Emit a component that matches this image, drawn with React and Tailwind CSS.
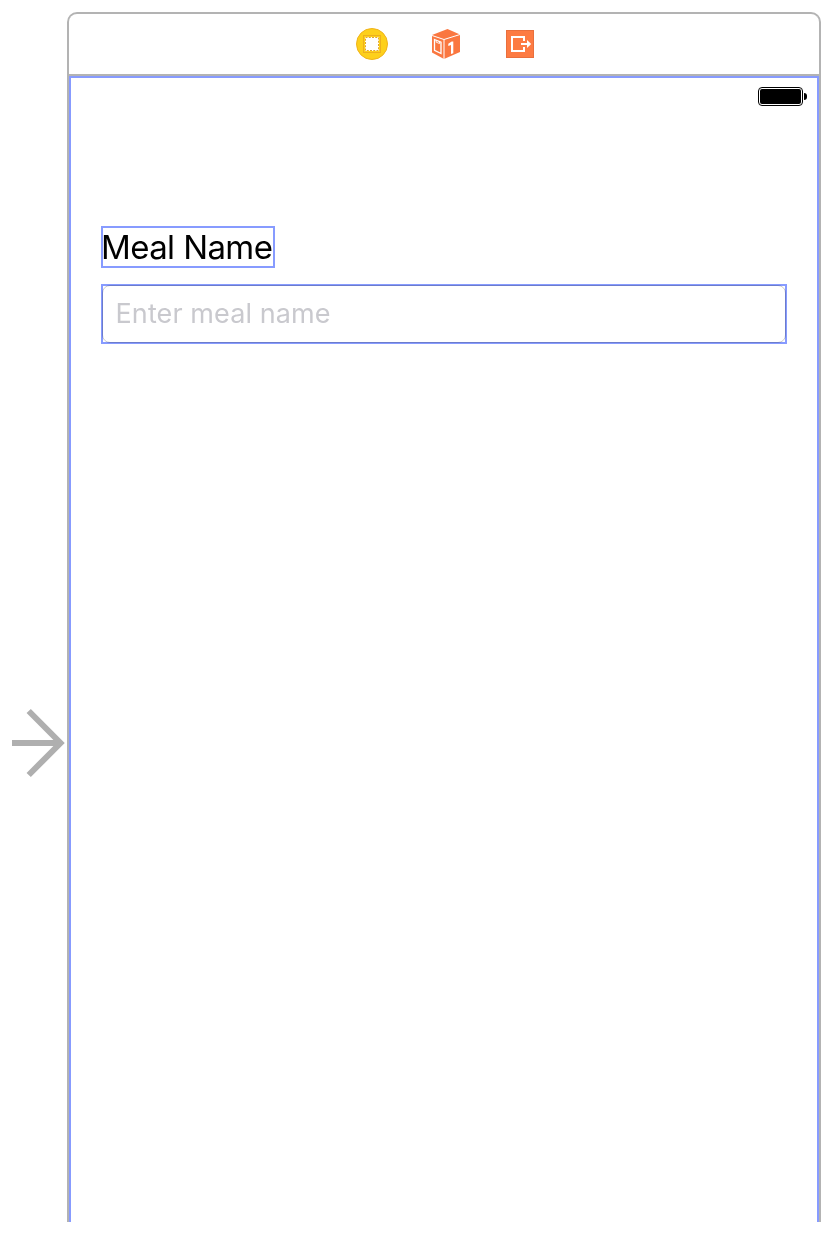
function ControllerIcon() {
  return (
    <svg width="32" height="32" viewBox="0 0 32 32" aria-hidden="true">
      <circle cx="16" cy="16" r="15.5" fill="#fdd01c" stroke="#f0b31b" />
      <rect x="7.5" y="7.5" width="17" height="17" fill="#fdd01c" stroke="#edb01f" />
      <rect x="9" y="9" width="14" height="14" fill="#fff" />
      <rect x="9.5" y="9.5" width="13" height="13" fill="none" stroke="#e2a62c" strokeDasharray="2 1.25" />
    </svg>
  );
}

function ResponderIcon() {
  return (
    <svg width="30" height="32" viewBox="0 0 30 32" aria-hidden="true">
      <path d="M1 7 16.5 1 29 6.5V24L13 31 1 24.5Z" fill="#fa7740" />
      <path d="M1 7.5 13 11.5 29 6.5M13 11.5V31" fill="none" stroke="#fff" strokeWidth="1" />
      <path d="M3.5 11.5 10 14.2V25.5L3.5 22.3Z" fill="none" stroke="#fff" strokeWidth="1.3" />
      <path d="M5.2 12.4v1.8l3.3 1.3v-1.8" fill="none" stroke="#fff" strokeWidth="0.9" />
      <path d="M17.3 15.8 20.7 13.5H22.3V25.2L20 26V16.9L17.3 18Z" fill="#fff" />
    </svg>
  );
}

function ExitIcon() {
  return (
    <svg width="28" height="28" viewBox="0 0 28 28" aria-hidden="true">
      <rect x="0.5" y="0.5" width="27" height="27" fill="#fd7b43" stroke="#e96f3d" />
      <path d="M18 11V7H6v14h12v-4" fill="none" stroke="#fff" strokeWidth="2" />
      <path d="M15 14h7" stroke="#fff" strokeWidth="2" />
      <path d="M21 10 25.2 14 21 18Z" fill="#fff" />
    </svg>
  );
}

function Battery() {
  return (
    <div className="flex items-center">
      <div className="h-[19px] w-[45px] rounded-[4px] border border-black p-px">
        <div className="h-full w-full rounded-[2px] bg-black" />
      </div>
      <div className="ml-px h-[7px] w-[3px] rounded-r-full bg-black" />
    </div>
  );
}

export default function App() {
  return (
    <div className="flex h-[1234px] w-[833px] bg-white pt-3 font-['Inter',sans-serif]">
      <aside className="w-[67px] shrink-0 pt-[696px]">
        <svg className="ml-3" width="54" height="70" viewBox="0 0 54 70" aria-hidden="true">
          <path d="M0 35H48M16.7 3 48.5 35 16.7 67" fill="none" stroke="#afafaf" strokeWidth="6" />
        </svg>
      </aside>
      <main className="flex h-[1210px] w-[754px] flex-col rounded-t-[10px] border-2 border-b-0 border-[#b3b3b3]">
        <header className="flex h-[62px] shrink-0 items-center justify-center gap-[43px] border-b-2 border-[#b3b3b3] pl-[2px]">
          <ControllerIcon />
          <ResponderIcon />
          <div className="ml-[2px] flex"><ExitIcon /></div>
        </header>
        <section className="flex flex-1 flex-col border-2 border-b-0 border-[#879bff]">
          <div className="flex h-[148px] justify-end pr-[10px] pt-[9px]">
            <div className="h-[19px]"><Battery /></div>
          </div>
          <form className="flex flex-col gap-4 px-[30px]">
            <label className="h-[42px] w-[174px] whitespace-nowrap border-2 border-[#879bff] text-[33px] leading-[38px] tracking-[-0.6px] text-black">
              <span className="-ml-[2px]">Meal Name</span>
            </label>
            <div className="relative h-[60px] p-px">
              <div className="h-[58px] rounded-[8px] border border-[#cccccc] pl-[12.5px] text-[27px] leading-[56px] tracking-[0.1px] text-[#c9c9ce]">
                Enter meal name
              </div>
              {/* Selection outline tints the field border beneath it */}
              <div className="pointer-events-none absolute inset-0 border-2 border-[#879bff] mix-blend-multiply" />
            </div>
          </form>
        </section>
      </main>
    </div>
  );
}
